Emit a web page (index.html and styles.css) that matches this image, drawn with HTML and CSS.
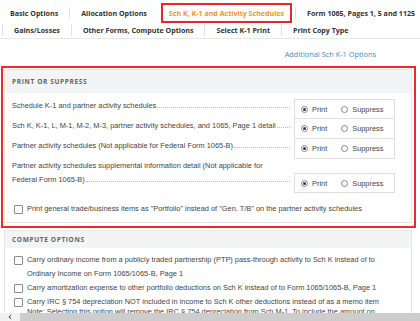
FILE: index.html
```html
<!DOCTYPE html>
<html lang="en">
<head>
    <meta charset="UTF-8">
    <meta name="viewport" content="width=device-width, initial-scale=1.0">
    <title>Sch K, K-1 and Activity Schedules</title>
    <link rel="stylesheet" href="styles.css">
</head>
<body>
    <div class="page">
        <!-- option tabs -->
        <div class="tabs">
            <div class="tab-row first">
                <span class="tab">Basic Options</span>
                <span class="tab">Allocation Options</span>
                <span class="tab active"><span class="tab-label">Sch K, K-1 and Activity Schedules</span></span>
                <span class="tab">Form 1065, Pages 1, 5 and 1125</span>
            </div>
            <div class="tab-row second">
                <span class="tab">Gains/Losses</span>
                <span class="tab">Other Forms, Compute Options</span>
                <span class="tab">Select K-1 Print</span>
                <span class="tab">Print Copy Type</span>
            </div>
        </div>

        <div class="link-row">
            <a href="#">Additional Sch K-1 Options</a>
        </div>

        <!-- print or suppress -->
        <div class="highlight">
            <div class="panel">
                <div class="panel-head">Print or Suppress</div>
                <div class="panel-body print-body">
                    <div class="print-row">
                        <div class="print-label">
                            <div class="leader-line"><span>Schedule K-1 and partner activity schedules</span><span class="leader"></span></div>
                        </div>
                        <div class="choice">
                            <span class="radio checked"></span><span class="choice-text">Print</span>
                            <span class="radio"></span><span class="choice-text">Suppress</span>
                        </div>
                    </div>
                    <div class="print-row">
                        <div class="print-label">
                            <div class="leader-line"><span>Sch K, K-1, L, M-1, M-2, M-3, partner activity schedules, and 1065, Page 1 detail</span><span class="leader"></span></div>
                        </div>
                        <div class="choice joined">
                            <span class="radio checked"></span><span class="choice-text">Print</span>
                            <span class="radio"></span><span class="choice-text">Suppress</span>
                        </div>
                    </div>
                    <div class="print-row">
                        <div class="print-label">
                            <div class="leader-line"><span>Partner activity schedules (Not applicable for Federal Form 1065-B)</span><span class="leader"></span></div>
                        </div>
                        <div class="choice joined">
                            <span class="radio checked"></span><span class="choice-text">Print</span>
                            <span class="radio"></span><span class="choice-text">Suppress</span>
                        </div>
                    </div>
                    <div class="print-row">
                        <div class="print-label">
                            <div>Partner activity schedules supplemental information detail (Not applicable for</div>
                            <div class="leader-line"><span>Federal Form 1065-B)</span><span class="leader"></span></div>
                        </div>
                        <div class="choice">
                            <span class="radio checked"></span><span class="choice-text">Print</span>
                            <span class="radio"></span><span class="choice-text">Suppress</span>
                        </div>
                    </div>

                    <div class="check-row portfolio">
                        <span class="checkbox"></span>
                        <span>Print general trade/business items as "Portfolio" instead of "Gen. T/B" on the partner activity schedules</span>
                    </div>
                </div>
            </div>
        </div>

        <!-- compute options -->
        <div class="panel compute">
            <div class="panel-head">Compute Options</div>
            <div class="panel-body compute-body">
                <div class="check-row">
                    <span class="checkbox"></span>
                    <span>Carry ordinary income from a publicly traded partnership (PTP) pass-through activity to Sch K instead of to<br>Ordinary Income on Form 1065/1065-B, Page 1</span>
                </div>
                <div class="check-row">
                    <span class="checkbox"></span>
                    <span>Carry amortization expense to other portfolio deductions on Sch K instead of to Form 1065/1065-B, Page 1</span>
                </div>
                <div class="check-row">
                    <span class="checkbox"></span>
                    <span>Carry IRC § 754 depreciation NOT included in income to Sch K other deductions instead of as a memo item<br><span class="note">Note: Selecting this option will remove the IRC § 754 depreciation from Sch M-1. To include the amount on</span></span>
                </div>
            </div>
        </div>
    </div>

    <!-- horizontal scrollbar -->
    <div class="hscroll">
        <span class="hscroll-btn">&#8249;</span>
        <span class="hscroll-track"></span>
    </div>
</body>
</html>
```

FILE: styles.css
```css
body {
    margin: 0;
    padding: 0;
    background-color: #fff;
    font-family: "Liberation Sans", Arial, sans-serif;
    font-size: 7.4px;
    color: #444;
    overflow: hidden;
}

.page {
    width: 420px;
}

/* tabs */
.tabs {
    border-bottom: 1px solid #e9e9e9;
    padding-bottom: 2px;
    font-family: "Open Sans", sans-serif;
    font-weight: 700;
    font-size: 7.1px;
    color: #333;
}

.tab-row {
    display: flex;
    align-items: center;
    white-space: nowrap;
}

.tab-row.first {
    height: 20px;
    margin-top: 3px;
    margin-left: -2px;
}

.tab-row.second {
    height: 13px;
    margin-left: 2px;
}

.tab {
    height: 12px;
    line-height: 12px;
    padding: 0 11px 0 11px;
    border-left: 1px solid #e2e2e2;
}

.tab-row.first .tab:first-child {
    border-left-color: transparent;
}

.tab.active {
    height: 20px;
    line-height: 16px;
    padding: 0 3px;
    border-left: none;
    display: flex;
    align-items: center;
}

.tab.active + .tab {
    border-left: 1px solid #e2e2e2;
}

.tab-row.first .tab:nth-child(2),
.tab-row.first .tab:nth-child(4) {
    border-left: 1px solid #e2e2e2;
}

.tab-label {
    border: 2px solid #e8262d;
    padding: 0 6px;
    color: #f7931e;
}

/* link */
.link-row {
    height: 27px;
    padding-top: 10px;
    box-sizing: border-box;
    line-height: 10px;
    text-align: right;
    padding-right: 44px;
    font-family: "Open Sans", sans-serif;
    font-size: 7.4px;
}

.link-row a {
    color: #3b8dc9;
    text-decoration: none;
}

/* panels */
.highlight {
    border: 2px solid #ec2a2a;
    margin: 0 4px 0 1px;
    padding: 1px 2px 3px 1px;
}

.panel {
    border: 1px solid #e6e6e6;
}

.panel-head {
    height: 23px;
    line-height: 24px;
    padding: 0 7px;
    background-color: #f3f4f6;
    font-family: "Open Sans", sans-serif;
    font-weight: 700;
    font-size: 6.6px;
    letter-spacing: 0.6px;
    text-transform: uppercase;
    color: #666;
}

.panel-body {
    padding: 6px 16px 0 7px;
}

.print-row {
    display: flex;
    align-items: flex-end;
}

.print-label {
    flex: 1;
    line-height: 14px;
    padding-bottom: 6px;
    white-space: nowrap;
}

.leader-line {
    display: flex;
    align-items: baseline;
}

.leader {
    flex: 1;
    border-bottom: 1px dotted #b8b8b8;
    margin: 0 4px 0 1px;
}

.choice {
    width: 93px;
    height: 18px;
    border: 1px solid #dedede;
    display: flex;
    align-items: center;
    padding-left: 6px;
    box-sizing: content-box;
}

.choice.joined {
    border-top: none;
    height: 19px;
}

.radio {
    flex: none;
    width: 5px;
    height: 5px;
    border: 1px solid #888;
    border-radius: 50%;
    display: flex;
    align-items: center;
    justify-content: center;
    margin-right: 4px;
}

.radio.checked::after {
    content: "";
    width: 3px;
    height: 3px;
    border-radius: 50%;
    background-color: #333;
}

.choice-text {
    margin-right: 14px;
}

.check-row {
    display: flex;
    align-items: flex-start;
    white-space: nowrap;
    line-height: 14px;
}

.checkbox {
    flex: none;
    width: 7px;
    height: 7px;
    border: 1px solid #8a8a8a;
    border-radius: 1px;
    margin: 3px 4px 0 2px;
}

.check-row.portfolio {
    margin-top: 9px;
    padding-bottom: 6px;
}

/* compute options */
.compute {
    margin: 2px 8px 0 4px;
}

.compute .panel-head {
    height: 17px;
    line-height: 17px;
}

.compute-body {
    padding-top: 5px;
}

.note {
    display: inline-block;
    line-height: 10px;
    vertical-align: top;
    margin-top: -2px;
}

/* scrollbar */
.hscroll {
    position: fixed;
    left: 0;
    right: 0;
    bottom: 0;
    height: 8px;
    display: flex;
    background-color: #f1f1f1;
}

.hscroll-btn {
    width: 20px;
    line-height: 8px;
    font-size: 11px;
    text-align: center;
    color: #333;
    font-family: "DejaVu Sans", sans-serif;
}

.hscroll-track {
    flex: 1;
    background-color: #cdcdcd;
}
```
